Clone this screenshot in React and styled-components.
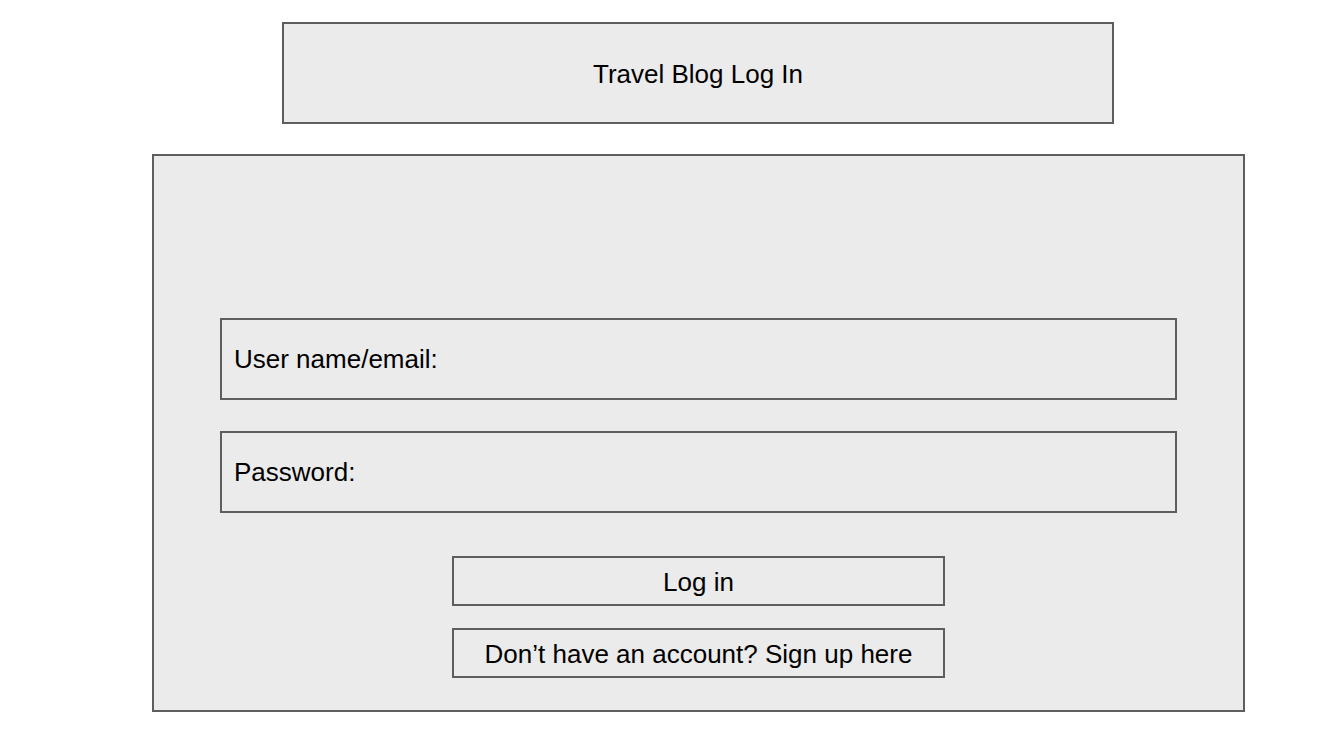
import React from "react";
import styled, { createGlobalStyle } from "styled-components";

const Global = createGlobalStyle`
  html, body { margin: 0; padding: 0; background: #ffffff; }
  body { font-family: "Liberation Sans", Arial, sans-serif; color: #000; }
  * { box-sizing: border-box; }
`;

const Page = styled.div`
  width: 1341px;
  height: 753px;
  padding-top: 22px;
  display: flex;
  flex-direction: column;
  align-items: flex-start;
`;

const Box = styled.div`
  background: #ebebeb;
  border: 2px solid #5e5e5e;
`;

const TitleBox = styled(Box)`
  margin-left: 282px;
  width: 832px;
  height: 102px;
  display: flex;
  align-items: center;
  justify-content: center;
  padding-top: 3px;
  font-size: 26px;
`;

const Panel = styled(Box)`
  margin-top: 30px;
  margin-left: 152px;
  width: 1093px;
  height: 558px;
  padding: 162px 66px 0;
  display: flex;
  flex-direction: column;
  align-items: center;
`;

const Field = styled(Box)`
  width: 957px;
  height: 82px;
  display: flex;
  align-items: center;
  padding-left: 12px;
  padding-top: 1px;
  font-size: 26px;
  margin-top: ${(p) => p.$gap || 0}px;
`;

const Button = styled(Box)`
  width: 493px;
  height: 50px;
  display: flex;
  align-items: center;
  justify-content: center;
  padding-top: 2px;
  font-size: 26px;
  margin-top: ${(p) => p.$gap || 0}px;
`;

export default function App() {
  return (
    <>
      <Global />
      <Page>
        <TitleBox>Travel Blog Log In</TitleBox>
        <Panel>
          <Field>User name/email:</Field>
          <Field $gap={31}>Password:</Field>
          <Button $gap={43}>Log in</Button>
          <Button $gap={22}>Don’t have an account? Sign up here</Button>
        </Panel>
      </Page>
    </>
  );
}
